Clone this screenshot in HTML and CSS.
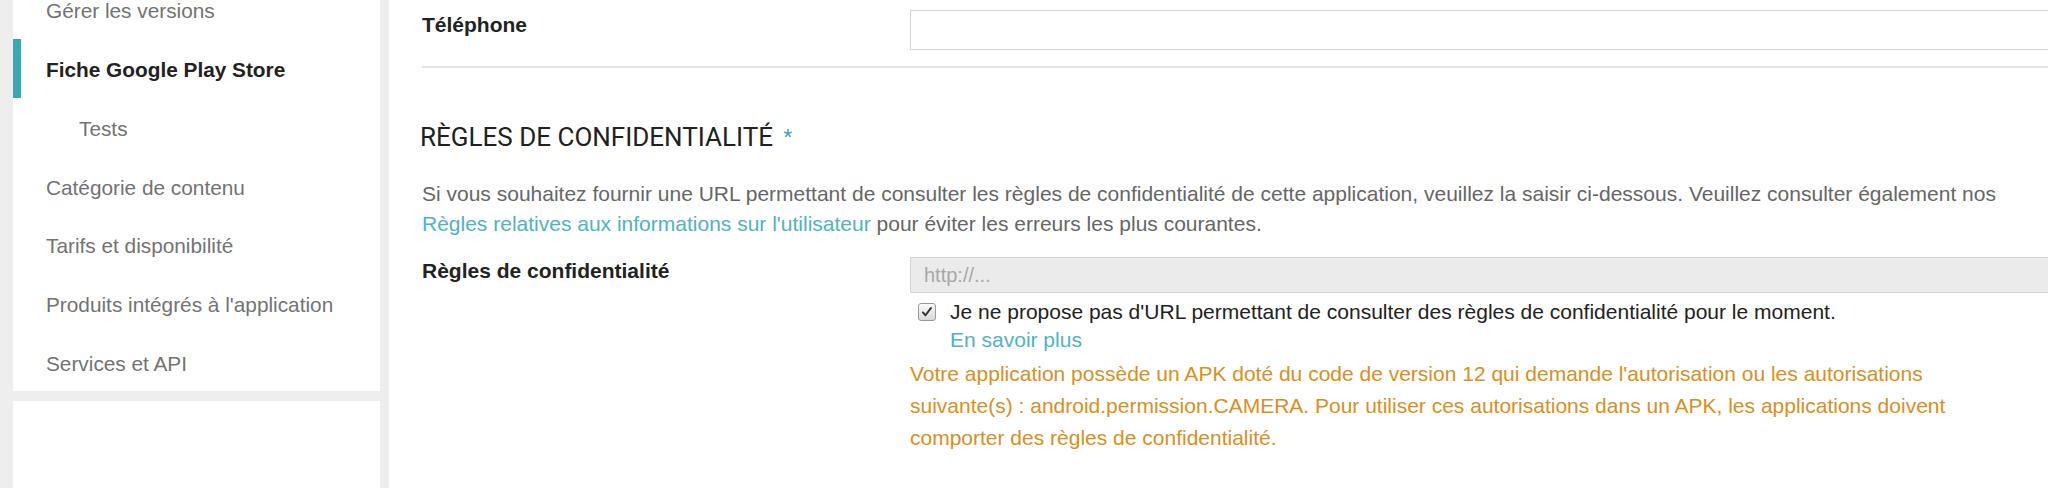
FILE: index.html
```html
<!DOCTYPE html>
<html lang="fr">
<head>
<meta charset="utf-8">
<title>Fiche Google Play Store</title>
<link rel="stylesheet" href="styles.css">
</head>
<body>
<div class="page">
  <aside class="side">
    <nav class="card nav">
      <a class="item">Gérer les versions</a>
      <a class="item active">Fiche Google Play Store</a>
      <a class="item sub">Tests</a>
      <a class="item">Catégorie de contenu</a>
      <a class="item">Tarifs et disponibilité</a>
      <a class="item">Produits intégrés à l'application</a>
      <a class="item">Services et API</a>
    </nav>
    <div class="card filler"></div>
  </aside>
  <main class="main">
    <div class="row phone">
      <label class="label">Téléphone</label>
      <div class="field"><input class="input" type="text"></div>
    </div>
    <hr class="rule">
    <h2 class="heading">RÈGLES DE CONFIDENTIALITÉ <span class="req">*</span></h2>
    <p class="intro">Si vous souhaitez fournir une URL permettant de consulter les règles de confidentialité de cette application, veuillez la saisir ci-dessous. Veuillez consulter également nos <a class="link">Règles relatives aux informations sur l'utilisateur</a> pour éviter les erreurs les plus courantes.</p>
    <div class="row privacy">
      <label class="label">Règles de confidentialité</label>
      <div class="field">
        <input class="input disabled" type="text" placeholder="http://..." disabled>
        <div class="check-row">
          <span class="checkbox"><svg viewBox="0 0 16 16" width="12" height="12"><path d="M2.5 8.6 L6 12.3 L13.4 2.6" fill="none" stroke="#333" stroke-width="2.6" stroke-linecap="round" stroke-linejoin="round"/></svg></span>
          <div class="check-text">
            <div>Je ne propose pas d'URL permettant de consulter des règles de confidentialité pour le moment.</div>
            <a class="link">En savoir plus</a>
          </div>
        </div>
        <p class="warning">Votre application possède un APK doté du code de version 12 qui demande l'autorisation ou les autorisations suivante(s) : android.permission.CAMERA. Pour utiliser ces autorisations dans un APK, les applications doivent comporter des règles de confidentialité.</p>
      </div>
    </div>
  </main>
</div>
</body>
</html>
```
FILE: styles.css
```css
html, body {
  margin: 0;
  padding: 0;
  height: 488px;
  overflow: hidden;
  background: #eeeeee;
  font-family: "Liberation Sans", Arial, sans-serif;
}

.page {
  display: flex;
  gap: 9px;
  padding-left: 13px;
  height: 488px;
}

.side {
  width: 367px;
  flex: none;
  display: flex;
  flex-direction: column;
  gap: 10px;
}

.card {
  background: #ffffff;
}

.nav {
  display: flex;
  flex-direction: column;
  margin-top: -20px;
}

.item {
  display: flex;
  align-items: center;
  box-sizing: border-box;
  height: 58.75px;
  padding-top: 4px;
  font-size: 20.8px;
  color: #737373;
  border-left: 8px solid transparent;
  padding-left: 25px;
}

.item.active {
  color: #222222;
  font-weight: bold;
  border-left-color: #3aa7b6;
}

.item.sub {
  padding-left: 58px;
}

.filler {
  flex: 1;
}

.main {
  flex: 1;
  background: #ffffff;
  padding: 10px 0 0 33px;
  min-width: 0;
}

.row {
  display: flex;
  align-items: flex-start;
}

.label {
  width: 488px;
  flex: none;
  font-size: 21px;
  line-height: 24px;
  font-weight: bold;
  color: #222222;
}

.phone .label {
  padding-top: 3px;
}

.field {
  flex: 1;
  min-width: 0;
}

.input {
  display: block;
  box-sizing: border-box;
  width: 100%;
  height: 40px;
  margin: 0;
  border: 1px solid #d3d3d3;
  border-right: none;
  background: #ffffff;
  font-family: inherit;
  font-size: 20px;
  padding: 0 13px;
}

.rule {
  margin: 16px 0 0 0;
  border: none;
  border-top: 2px solid #e3e3e3;
}

.heading {
  margin: 53px 0 0 -2px;
  font-family: Roboto, "Liberation Sans", sans-serif;
  font-weight: 400;
  font-size: 26px;
  color: #212121;
  line-height: 32px;
}

.req {
  color: #3fa9b5;
  font-size: 20px;
  margin-left: 4px;
  vertical-align: 2px;
}

.intro {
  margin: 26px 0 0 0;
  font-size: 21px;
  line-height: 30px;
  color: #666666;
  max-width: 1600px;
}

.link {
  color: #4fb3c2;
  text-decoration: none;
}

.privacy {
  margin-top: 18px;
}

.privacy .label {
  padding-top: 2px;
}

.input.disabled {
  background: #ebebeb;
  border-color: #d6d6d6;
  height: 36px;
}

.input.disabled::placeholder {
  color: #a8a8a8;
}

.check-row {
  display: flex;
  margin-top: 5px;
  padding-left: 8px;
}

.checkbox {
  flex: none;
  box-sizing: border-box;
  width: 18px;
  height: 18px;
  margin-top: 5px;
  margin-right: 14px;
  border: 1px solid #9a9a9a;
  border-radius: 3px;
  background: linear-gradient(#fafafa, #d8d8d8);
  display: flex;
  align-items: center;
  justify-content: center;
}

.check-text {
  font-size: 21px;
  line-height: 28px;
  color: #222222;
}

.warning {
  margin: 4px 0 0 0;
  font-size: 21px;
  line-height: 32px;
  color: #d8901e;
  max-width: 1050px;
}
```
